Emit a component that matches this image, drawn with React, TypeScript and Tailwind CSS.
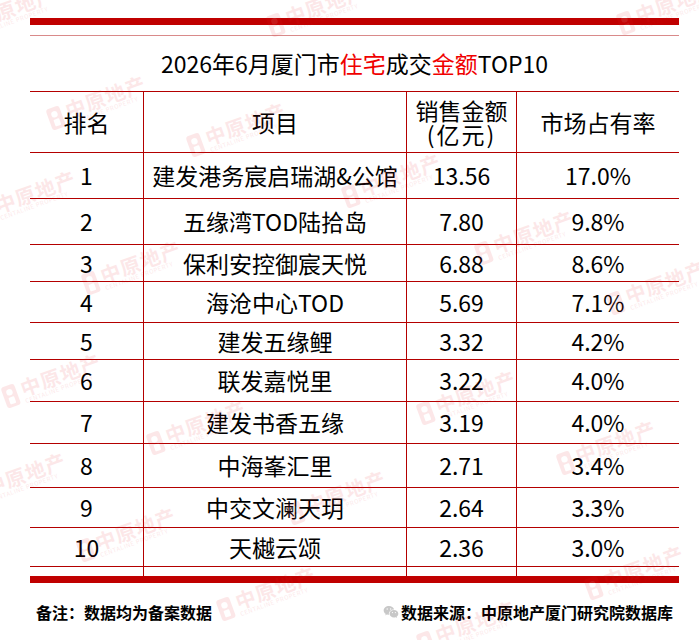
import { RiWechatFill } from "react-icons/ri";

interface Row {
  rank: number;
  name: string;
  amount: string;
  share: string;
  h: string;
}

// row heights differ in the source picture, so each row carries its own
const ROWS: Row[] = [
  { rank: 1, name: "建发港务宸启瑞湖&公馆", amount: "13.56", share: "17.0%", h: "h-[46px]" },
  { rank: 2, name: "五缘湾TOD陆拾岛", amount: "7.80", share: "9.8%", h: "h-[46px]" },
  { rank: 3, name: "保利安控御宸天悦", amount: "6.88", share: "8.6%", h: "h-[37px]" },
  { rank: 4, name: "海沧中心TOD", amount: "5.69", share: "7.1%", h: "h-[41px]" },
  { rank: 5, name: "建发五缘鲤", amount: "3.32", share: "4.2%", h: "h-[37px]" },
  { rank: 6, name: "联发嘉悦里", amount: "3.22", share: "4.0%", h: "h-[42px]" },
  { rank: 7, name: "建发书香五缘", amount: "3.19", share: "4.0%", h: "h-[42px]" },
  { rank: 8, name: "中海峯汇里", amount: "2.71", share: "3.4%", h: "h-[44px]" },
  { rank: 9, name: "中交文澜天玥", amount: "2.64", share: "3.3%", h: "h-[40px]" },
  { rank: 10, name: "天樾云颂", amount: "2.36", share: "3.0%", h: "h-[39px]" },
];

// centres of the faint "中原地产" watermarks
const MARKS: [number, number][] = [
  [10, 15], [320, 12], [670, 10],
  [100, 105], [240, 132], [30, 200],
  [395, 183], [135, 270], [528, 240],
  [660, 290], [55, 383], [200, 430],
  [470, 400], [20, 482], [610, 450],
  [130, 537], [340, 500], [270, 596],
  [638, 575], [470, 630],
];

const GRID = "grid grid-cols-[113px_263px_110px_163px] border-t border-[#b40000]";
const CELL = "flex items-center justify-center";
const CELL_L = "flex items-center justify-center border-l border-[#b40000]";

function Watermark({ x, y }: { x: number; y: number }) {
  return (
    <div className="pointer-events-none absolute h-0 w-0" style={{ left: x, top: y }}>
      <div className="absolute left-[-55px] top-[-16px] flex w-[110px] -rotate-20 items-center gap-1 text-[#e8202a] opacity-[0.1]">
        <svg width="16" height="24" viewBox="0 0 16 24">
          <rect x="1" y="1" width="14" height="22" rx="3" fill="currentColor" />
          <circle cx="8" cy="8" r="3.2" fill="white" />
          <rect x="5" y="13" width="6" height="7" rx="1" fill="white" />
        </svg>
        <div className="flex flex-col leading-none">
          <span className="text-[20px] font-bold tracking-[1px]">中原地产</span>
          <span className="text-[6px] tracking-[0.5px]">CENTALINE PROPERTY</span>
        </div>
      </div>
    </div>
  );
}

export default function App() {
  return (
    <div
      className="relative h-[640px] w-[699px] overflow-hidden bg-white text-black"
      style={{ fontFamily: "'Noto Sans CJK SC', 'Noto Sans', sans-serif" }}
    >
      <div className="w-[649px] ml-[30px] pt-[18px]">
        <div className="h-[7px] bg-[#c00000]" />
        <div className="h-[10px]" />
        <div className="h-px bg-[#d98a8a]" />

        {/* title */}
        <div className="flex h-[55px] items-center justify-center text-[23px] leading-none">
          <span>2026年6月厦门市</span>
          <span className="text-[#f00000]">住宅</span>
          <span>成交</span>
          <span className="text-[#f00000]">金额</span>
          <span>TOP10</span>
        </div>

        {/* header */}
        <div className={`${GRID} h-[61px] text-[23px]`}>
          <div className={CELL}>排名</div>
          <div className={CELL_L}>项目</div>
          <div className={`${CELL_L} flex-col leading-[24px]`}>
            <span>销售金额</span>
            <span className="tracking-[2px]">(亿元)</span>
          </div>
          <div className={CELL_L}>市场占有率</div>
        </div>

        {ROWS.map((r) => (
          <div key={r.rank} className={`${GRID} ${r.h} text-[23px] leading-none`}>
            <div className={CELL}>{r.rank}</div>
            <div className={CELL_L}>{r.name}</div>
            <div className={CELL_L}>{r.amount}</div>
            <div className={CELL_L}>{r.share}</div>
          </div>
        ))}

        {/* empty spacer row */}
        <div className={`${GRID} h-[10px]`}>
          <div />
          <div className="border-l border-[#b40000]" />
          <div className="border-l border-[#b40000]" />
          <div className="border-l border-[#b40000]" />
        </div>
        <div className="h-[7px] bg-[#c00000]" />

        {/* notes */}
        <div className="flex items-center justify-between px-[6px] pt-[21px] text-[16px] font-bold leading-[16px]">
          <span>备注：数据均为备案数据</span>
          <div className="flex items-center gap-[2px]">
            <RiWechatFill className="text-[#c8c8c8]" size={16} />
            <span>数据来源：中原地产厦门研究院数据库</span>
          </div>
        </div>
      </div>

      {MARKS.map(([x, y], i) => (
        <Watermark key={i} x={x} y={y} />
      ))}
    </div>
  );
}
